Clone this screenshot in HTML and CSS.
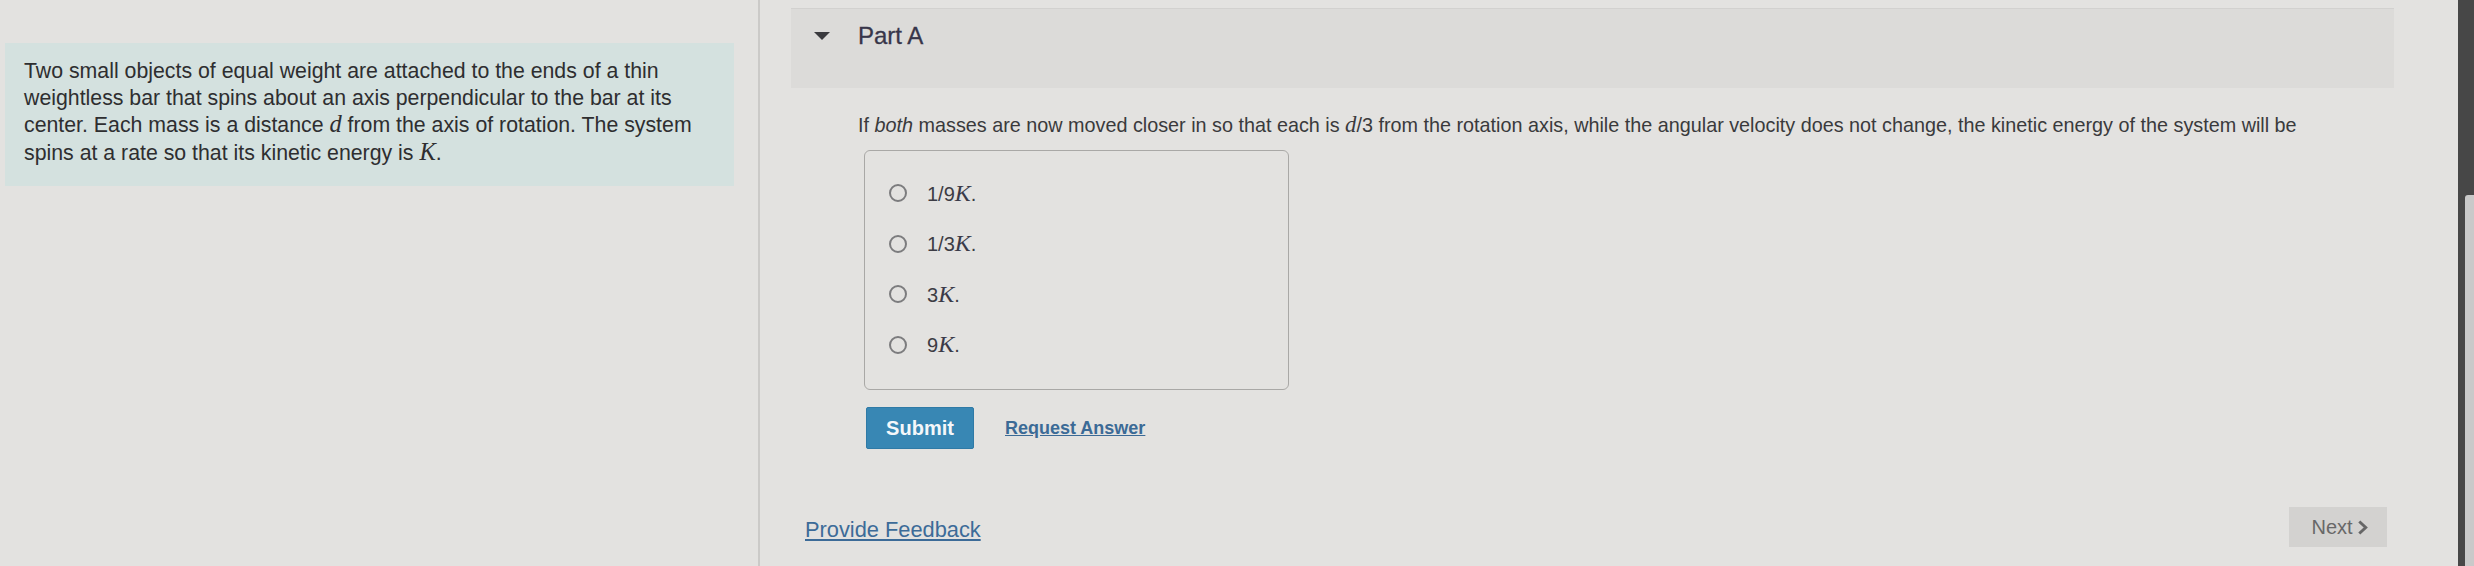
FILE: index.html
```html
<!DOCTYPE html>
<html lang="en">
<head>
<meta charset="utf-8">
<title>Part A</title>
<link rel="stylesheet" href="styles.css">
</head>
<body>
<div class="page">
  <aside class="left">
    <div class="intro">
      Two small objects of equal weight are attached to the ends of a thin<br>
      weightless bar that spins about an axis perpendicular to the bar at its<br>
      center. Each mass is a distance <span class="math">d</span> from the axis of rotation. The system<br>
      spins at a rate so that its kinetic energy is <span class="math">K</span>.
    </div>
  </aside>
  <main class="main">
    <div class="part-header">
      <span class="caret"></span>
      <span class="part-title">Part A</span>
    </div>
    <div class="content">
      <p class="question">If <em>both</em> masses are now moved closer in so that each is <span class="math">d</span>/3 from the rotation axis, while the angular velocity does not change, the kinetic energy of the system will be</p>
      <div class="choices">
        <label class="choice"><span class="radio"></span><span class="choice-text">1/9<span class="math big">K</span>.</span></label>
        <label class="choice"><span class="radio"></span><span class="choice-text">1/3<span class="math big">K</span>.</span></label>
        <label class="choice"><span class="radio"></span><span class="choice-text">3<span class="math big">K</span>.</span></label>
        <label class="choice"><span class="radio"></span><span class="choice-text">9<span class="math big">K</span>.</span></label>
      </div>
      <div class="actions">
        <button class="submit">Submit</button>
        <a class="request" href="#">Request Answer</a>
      </div>
    </div>
    <div class="footer">
      <a class="feedback" href="#">Provide Feedback</a>
      <button class="next">Next <svg class="chev" viewBox="0 0 12 16" width="11" height="15"><path d="M2.5 1.5 L9.5 8 L2.5 14.5" fill="none" stroke="#666" stroke-width="3.2"/></svg></button>
    </div>
  </main>
  <div class="frame"><div class="thumb"></div></div>
</div>
</body>
</html>
```
FILE: styles.css
```css
html, body {
  margin: 0;
  padding: 0;
}
body {
  width: 2474px;
  height: 566px;
  overflow: hidden;
  background: #e3e2e0;
  font-family: "Liberation Sans", Arial, sans-serif;
  color: #333;
}
.page {
  display: flex;
  height: 566px;
}
.left {
  width: 760px;
  flex: none;
  border-right: 2px solid #cbcac8;
  padding: 43px 0 0 5px;
  box-sizing: border-box;
}
.intro {
  width: 729px;
  height: 143px;
  box-sizing: border-box;
  background: #d4e1df;
  padding: 15px 0 0 19px;
  font-size: 21.3px;
  line-height: 26.5px;
  color: #2e2e30;
}
.math {
  font-family: "Liberation Serif", "Times New Roman", serif;
  font-style: italic;
  font-size: 1.15em;
}
.main {
  flex: 1;
  display: flex;
  flex-direction: column;
  min-width: 0;
}
.part-header {
  margin: 8px 64px 0 31px;
  height: 80px;
  box-sizing: border-box;
  background: #dcdbd9;
  border-top: 1px solid #d2d1cf;
  display: flex;
  align-items: flex-start;
  padding: 15px 0 0 23px;
}
.caret {
  width: 0;
  height: 0;
  border-left: 8px solid transparent;
  border-right: 8px solid transparent;
  border-top: 8px solid #3a3a3e;
  margin-top: 8px;
}
.part-title {
  margin-left: 28px;
  font-size: 24px;
  line-height: 24px;
  color: #38364a;
  -webkit-text-stroke: 0.3px #38364a;
}
.content {
  padding-left: 98px;
}
.question {
  margin: 24px 0 0 0;
  font-size: 19.8px;
  line-height: 26px;
  color: #3a3a3c;
  white-space: nowrap;
}
.question em {
  font-style: italic;
}
.choices {
  margin: 12px 0 0 6px;
  width: 425px;
  height: 240px;
  box-sizing: border-box;
  border: 1px solid #a9a8a6;
  border-radius: 6px;
  padding: 17px 0 0 24px;
  display: flex;
  flex-direction: column;
}
.choice {
  display: flex;
  align-items: center;
  height: 50.5px;
}
.radio {
  width: 18px;
  height: 18px;
  box-sizing: border-box;
  border: 2px solid #7c7c7e;
  border-radius: 50%;
  flex: none;
}
.choice-text {
  margin-left: 20px;
  font-size: 20px;
  color: #3c3c44;
}
.math.big {
  font-size: 24px;
  color: #3a3a48;
}
.actions {
  margin: 17px 0 0 8px;
  display: flex;
  align-items: center;
}
.submit {
  width: 108px;
  height: 42px;
  border: 1px solid #2f7aa6;
  border-radius: 2px;
  background: #3887b4;
  color: #f4f7fa;
  font-family: "Liberation Sans", Arial, sans-serif;
  font-weight: bold;
  font-size: 20px;
  padding: 0;
}
.request {
  margin-left: 31px;
  font-size: 18px;
  font-weight: bold;
  color: #3b6a96;
  text-decoration: underline;
}
.footer {
  margin-top: 61px;
  display: flex;
  align-items: center;
  justify-content: space-between;
  padding: 0 71px 0 45px;
  height: 40px;
}
.feedback {
  font-size: 21.8px;
  color: #3c6b98;
  text-decoration: underline;
}
.next {
  width: 98px;
  height: 40px;
  margin-top: -6px;
  border: none;
  background: #d3d2d0;
  color: #686868;
  font-family: "Liberation Sans", Arial, sans-serif;
  font-size: 20px;
  display: flex;
  align-items: center;
  justify-content: center;
  gap: 4px;
  padding: 0 0 0 3px;
}
.chev {
  display: block;
}
.frame {
  width: 16px;
  flex: none;
  background: #474747;
  position: relative;
}
.thumb {
  position: absolute;
  right: 0;
  top: 195px;
  bottom: 0;
  width: 9px;
  background: #c9c9c9;
  border-top-left-radius: 3px;
}
```
